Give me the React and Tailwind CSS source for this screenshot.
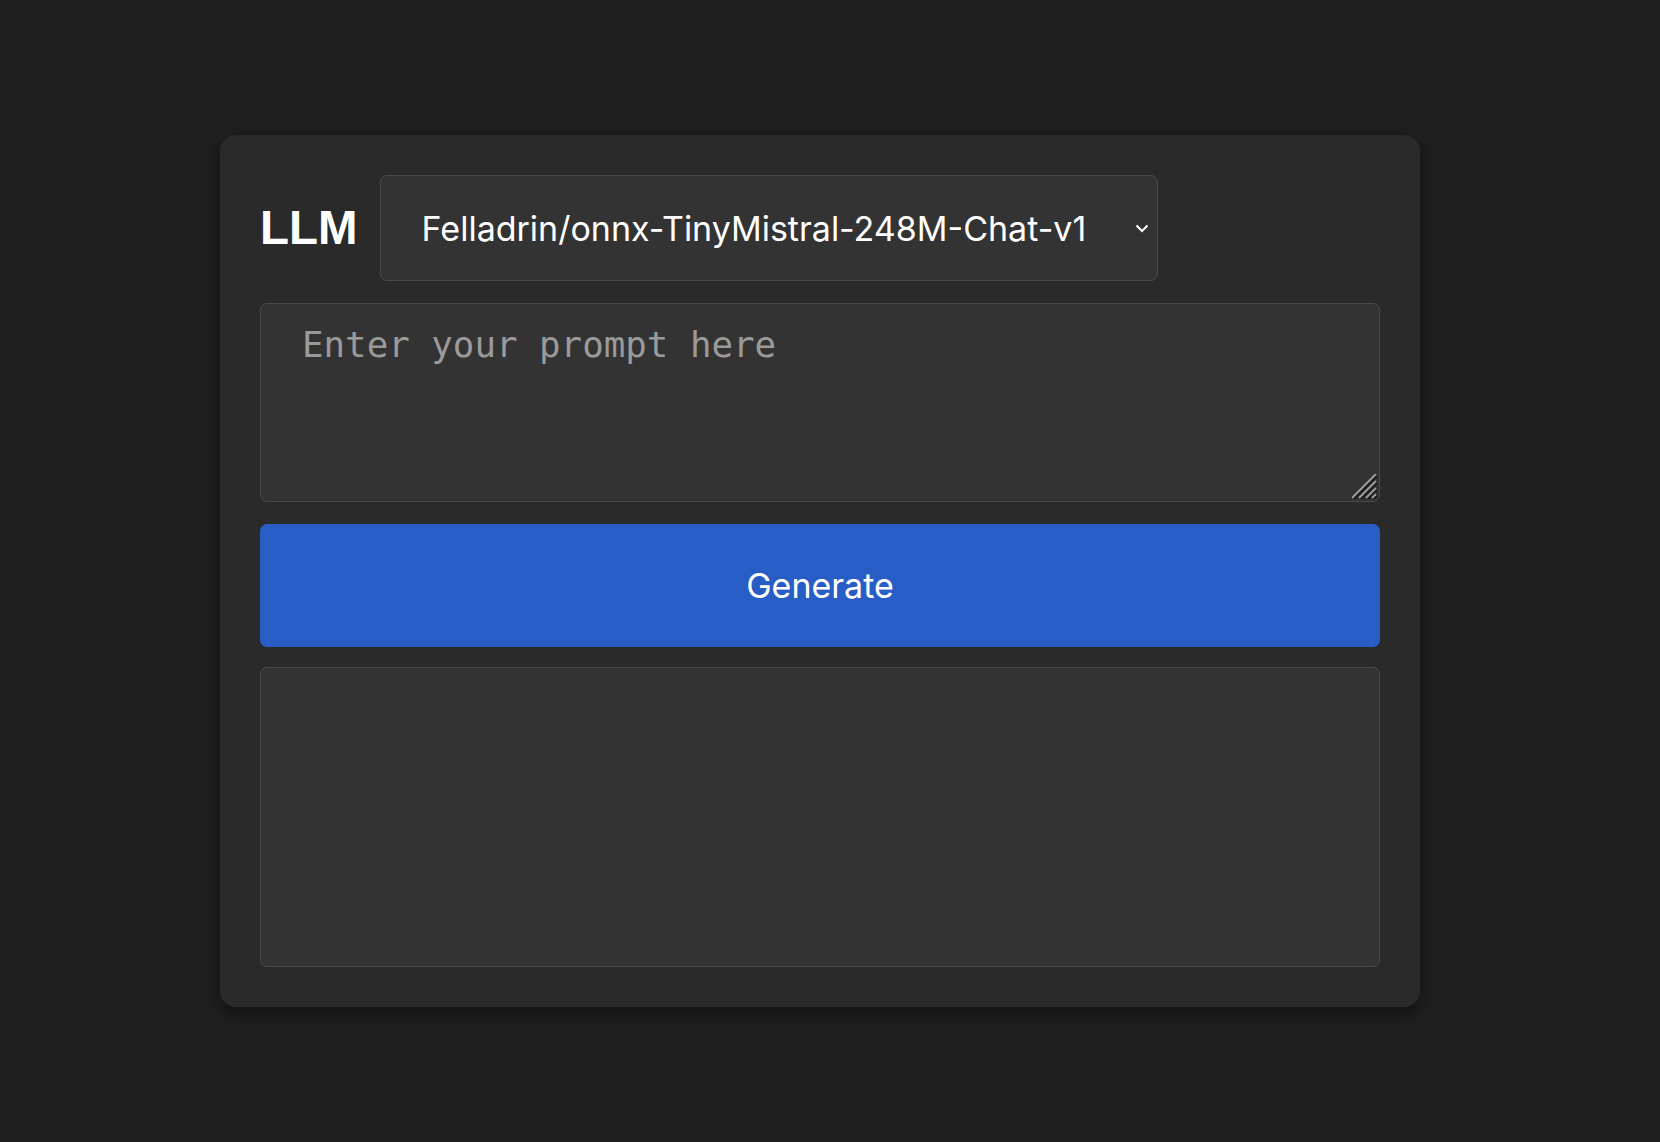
import React, { useState } from "react";

const models = [
  "Felladrin/onnx-TinyMistral-248M-Chat-v1",
  "Xenova/TinyLlama-1.1B-Chat-v1.0",
  "Xenova/Qwen1.5-0.5B-Chat",
];

export default function App() {
  const [model, setModel] = useState(models[0]);
  const [prompt, setPrompt] = useState("");
  const [output, setOutput] = useState("");

  return (
    <div className="min-h-screen bg-[#1f1f1f] pl-[220px] pt-[135px] font-['Inter',sans-serif]">
      <div className="w-[1200px] rounded-[16px] bg-[#2a2a2a] p-[40px] shadow-[0_6px_18px_rgba(0,0,0,0.45)]">
        {/* Model picker */}
        <div className="flex items-center gap-[22px]">
          <h1 className="font-['Liberation_Sans',Arial,sans-serif] text-[47.5px] font-bold leading-none text-white">
            LLM
          </h1>
          <div className="relative">
            <select
              value={model}
              onChange={(e) => setModel(e.target.value)}
              className="h-[106px] w-[778px] appearance-none rounded-[7px] border border-[#4a4a4a] bg-[#333333] pl-[41px] pr-[60px] text-[34px] text-white outline-none"
            >
              {models.map((m) => (
                <option key={m} value={m}>
                  {m}
                </option>
              ))}
            </select>
            <svg
              className="pointer-events-none absolute right-[9px] top-[49px]"
              width="14"
              height="9"
              viewBox="0 0 14 9"
              fill="none"
            >
              <path d="M1.5 1.5 7 7l5.5-5.5" stroke="white" strokeWidth="2" />
            </svg>
          </div>
        </div>

        {/* Prompt */}
        <div className="relative mt-[22px]">
          <textarea
            value={prompt}
            onChange={(e) => setPrompt(e.target.value)}
            placeholder="Enter your prompt here"
            className="block h-[199px] w-full resize-none rounded-[7px] border border-[#4a4a4a] bg-[#333333] px-[41px] pb-[16px] pt-[14px] font-['DejaVu_Sans_Mono',monospace] text-[35.8px] text-white outline-none placeholder:text-[#9a9a9a]"
          />
          <svg
            className="pointer-events-none absolute bottom-[3px] right-[3px]"
            width="25"
            height="25"
            viewBox="0 0 25 25"
          >
            <path d="M25 1.5 1.5 25M25 8.5 8.5 25M25 15.5 15.5 25M25 21.5 21.5 25" stroke="#1a1a1a" strokeWidth="2.6" />
            <path d="M24 0 0 24M24 7 7 24M24 14 14 24M24 20 20 24" stroke="#9a9a9a" strokeWidth="2" />
          </svg>
        </div>

        <button
          onClick={() => setOutput(prompt)}
          className="mt-[22px] block h-[123px] w-full rounded-[7px] bg-[#275dc5] text-[34px] text-white"
        >
          Generate
        </button>

        {/* Output */}
        <div className="mt-[20px] h-[300px] w-full rounded-[7px] border border-[#4a4a4a] bg-[#333333] p-[20px] text-[24px] text-white whitespace-pre-wrap">
          {output}
        </div>
      </div>
    </div>
  );
}
